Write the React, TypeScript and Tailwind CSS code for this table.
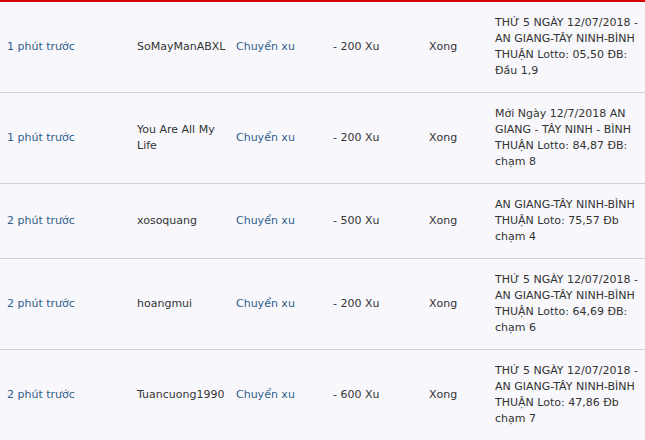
import React from 'react';

type Row = {
  time: string;
  user: string;
  amount: string;
  note: string;
};

const rows: Row[] = [
  {
    time: '1 phút trước',
    user: 'SoMayManABXL',
    amount: '- 200 Xu',
    note: 'THỨ 5 NGÀY 12/07/2018 - AN GIANG-TÂY NINH-BÌNH THUẬN Lotto: 05,50 ĐB: Đầu 1,9',
  },
  {
    time: '1 phút trước',
    user: 'You Are All My Life',
    amount: '- 200 Xu',
    note: 'Mới Ngày 12/7/2018 AN GIANG - TÂY NINH - BÌNH THUẬN Lotto: 84,87 ĐB: chạm 8',
  },
  {
    time: '2 phút trước',
    user: 'xosoquang',
    amount: '- 500 Xu',
    note: 'AN GIANG-TÂY NINH-BÌNH THUẬN Loto: 75,57 Đb chạm 4',
  },
  {
    time: '2 phút trước',
    user: 'hoangmui',
    amount: '- 200 Xu',
    note: 'THỨ 5 NGÀY 12/07/2018 - AN GIANG-TÂY NINH-BÌNH THUẬN Lotto: 64,69 ĐB: chạm 6',
  },
  {
    time: '2 phút trước',
    user: 'Tuancuong1990',
    amount: '- 600 Xu',
    note: 'THỨ 5 NGÀY 12/07/2018 - AN GIANG-TÂY NINH-BÌNH THUẬN Loto: 47,86 Đb chạm 7',
  },
];

export default function App() {
  return (
    <div className="w-[645px] h-[440px] overflow-hidden bg-[#f8f8fc] border-t-2 border-[#d40000] font-['DejaVu_Sans',sans-serif] text-[11px] leading-[16px] text-[#333]">
      {rows.map((r, i) => (
        <div
          key={i}
          className="grid grid-cols-[130px_99px_97px_96px_66px_157px] items-center border-b border-[#cfcfd4] py-[13px]"
        >
          <div className="px-[7px] text-[#2f5d8a]">{r.time}</div>
          <div className="px-[7px]">{r.user}</div>
          <div className="px-[7px] text-[#2f5d8a]">Chuyển xu</div>
          <div className="px-[7px]">{r.amount}</div>
          <div className="px-[7px]">Xong</div>
          <div className="px-[7px]">{r.note}</div>
        </div>
      ))}
    </div>
  );
}
